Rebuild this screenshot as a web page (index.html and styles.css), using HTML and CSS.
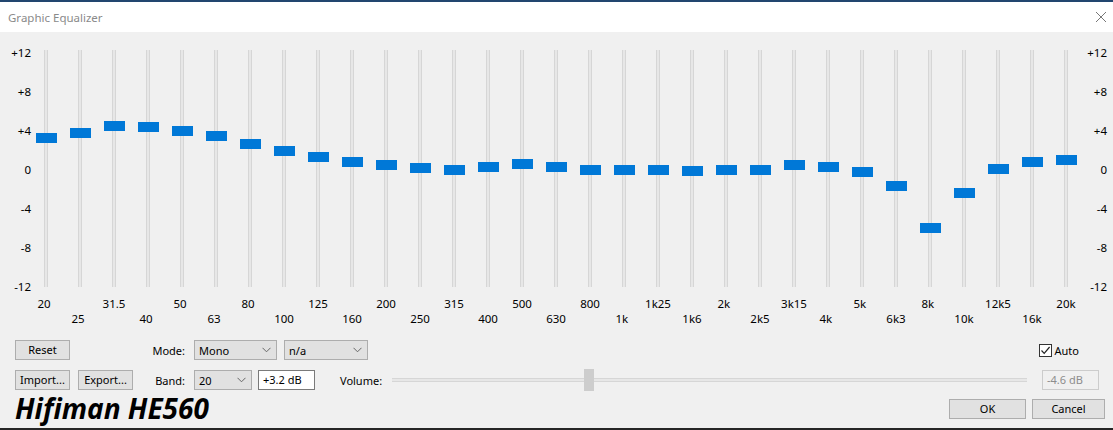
FILE: index.html
```html
<!DOCTYPE html>
<html>
<head>
<meta charset="utf-8">
<title>Graphic Equalizer</title>
<link rel="stylesheet" href="styles.css">
</head>
<body>
<div class="window">
  <div class="titlebar">
    <span class="title">Graphic Equalizer</span>
    <svg class="close" width="12" height="12" viewBox="0 0 12 12"><path d="M1 1 L11 11 M11 1 L1 11" stroke="#777" stroke-width="1" fill="none"/></svg>
  </div>
  <div class="client">
    <div class="eq">
      <div class="scale scale-left">
        <span>+12</span><span>+8</span><span>+4</span><span>0</span><span>-4</span><span>-8</span><span>-12</span>
      </div>
      <div class="bands">
        <div class="band up" style="--v:3.2"><div class="slider"><div class="track"></div><div class="thumb"></div></div><div class="freq"><span>20</span></div></div>
        <div class="band down" style="--v:3.7"><div class="slider"><div class="track"></div><div class="thumb"></div></div><div class="freq"><span>25</span></div></div>
        <div class="band up" style="--v:4.4"><div class="slider"><div class="track"></div><div class="thumb"></div></div><div class="freq"><span>31.5</span></div></div>
        <div class="band down" style="--v:4.3"><div class="slider"><div class="track"></div><div class="thumb"></div></div><div class="freq"><span>40</span></div></div>
        <div class="band up" style="--v:3.9"><div class="slider"><div class="track"></div><div class="thumb"></div></div><div class="freq"><span>50</span></div></div>
        <div class="band down" style="--v:3.4"><div class="slider"><div class="track"></div><div class="thumb"></div></div><div class="freq"><span>63</span></div></div>
        <div class="band up" style="--v:2.6"><div class="slider"><div class="track"></div><div class="thumb"></div></div><div class="freq"><span>80</span></div></div>
        <div class="band down" style="--v:1.8"><div class="slider"><div class="track"></div><div class="thumb"></div></div><div class="freq"><span>100</span></div></div>
        <div class="band up" style="--v:1.25"><div class="slider"><div class="track"></div><div class="thumb"></div></div><div class="freq"><span>125</span></div></div>
        <div class="band down" style="--v:0.75"><div class="slider"><div class="track"></div><div class="thumb"></div></div><div class="freq"><span>160</span></div></div>
        <div class="band up" style="--v:0.45"><div class="slider"><div class="track"></div><div class="thumb"></div></div><div class="freq"><span>200</span></div></div>
        <div class="band down" style="--v:0.1"><div class="slider"><div class="track"></div><div class="thumb"></div></div><div class="freq"><span>250</span></div></div>
        <div class="band up" style="--v:-0.1"><div class="slider"><div class="track"></div><div class="thumb"></div></div><div class="freq"><span>315</span></div></div>
        <div class="band down" style="--v:0.25"><div class="slider"><div class="track"></div><div class="thumb"></div></div><div class="freq"><span>400</span></div></div>
        <div class="band up" style="--v:0.55"><div class="slider"><div class="track"></div><div class="thumb"></div></div><div class="freq"><span>500</span></div></div>
        <div class="band down" style="--v:0.25"><div class="slider"><div class="track"></div><div class="thumb"></div></div><div class="freq"><span>630</span></div></div>
        <div class="band up" style="--v:-0.1"><div class="slider"><div class="track"></div><div class="thumb"></div></div><div class="freq"><span>800</span></div></div>
        <div class="band down" style="--v:-0.1"><div class="slider"><div class="track"></div><div class="thumb"></div></div><div class="freq"><span>1k</span></div></div>
        <div class="band up" style="--v:-0.1"><div class="slider"><div class="track"></div><div class="thumb"></div></div><div class="freq"><span>1k25</span></div></div>
        <div class="band down" style="--v:-0.2"><div class="slider"><div class="track"></div><div class="thumb"></div></div><div class="freq"><span>1k6</span></div></div>
        <div class="band up" style="--v:-0.1"><div class="slider"><div class="track"></div><div class="thumb"></div></div><div class="freq"><span>2k</span></div></div>
        <div class="band down" style="--v:-0.1"><div class="slider"><div class="track"></div><div class="thumb"></div></div><div class="freq"><span>2k5</span></div></div>
        <div class="band up" style="--v:0.45"><div class="slider"><div class="track"></div><div class="thumb"></div></div><div class="freq"><span>3k15</span></div></div>
        <div class="band down" style="--v:0.25"><div class="slider"><div class="track"></div><div class="thumb"></div></div><div class="freq"><span>4k</span></div></div>
        <div class="band up" style="--v:-0.3"><div class="slider"><div class="track"></div><div class="thumb"></div></div><div class="freq"><span>5k</span></div></div>
        <div class="band down" style="--v:-1.7"><div class="slider"><div class="track"></div><div class="thumb"></div></div><div class="freq"><span>6k3</span></div></div>
        <div class="band up" style="--v:-6.0"><div class="slider"><div class="track"></div><div class="thumb"></div></div><div class="freq"><span>8k</span></div></div>
        <div class="band down" style="--v:-2.5"><div class="slider"><div class="track"></div><div class="thumb"></div></div><div class="freq"><span>10k</span></div></div>
        <div class="band up" style="--v:0.0"><div class="slider"><div class="track"></div><div class="thumb"></div></div><div class="freq"><span>12k5</span></div></div>
        <div class="band down" style="--v:0.75"><div class="slider"><div class="track"></div><div class="thumb"></div></div><div class="freq"><span>16k</span></div></div>
        <div class="band up" style="--v:0.95"><div class="slider"><div class="track"></div><div class="thumb"></div></div><div class="freq"><span>20k</span></div></div>
      </div>
      <div class="scale scale-right">
        <span>+12</span><span>+8</span><span>+4</span><span>0</span><span>-4</span><span>-8</span><span>-12</span>
      </div>
    </div>

    <div class="controls">
      <div class="row row1">
        <button class="btn btn-small">Reset</button>
        <span class="label label-mode">Mode:</span>
        <div class="combo combo-mode"><span>Mono</span><svg class="chev" width="9" height="6" viewBox="0 0 9 6"><path d="M0.5 0.8 L4.5 4.8 L8.5 0.8" stroke="#666" stroke-width="1" fill="none"/></svg></div>
        <div class="combo combo-na"><span>n/a</span><svg class="chev" width="9" height="6" viewBox="0 0 9 6"><path d="M0.5 0.8 L4.5 4.8 L8.5 0.8" stroke="#666" stroke-width="1" fill="none"/></svg></div>
        <div class="spacer"></div>
        <label class="check">
          <span class="box"><svg width="11" height="11" viewBox="0 0 11 11"><path d="M1.5 5.5 L4.2 8.3 L9.6 2" stroke="#222" stroke-width="1.2" fill="none"/></svg></span>
          <span>Auto</span>
        </label>
      </div>
      <div class="row row2">
        <button class="btn btn-small">Import...</button>
        <button class="btn btn-small btn-export">Export...</button>
        <span class="label label-band">Band:</span>
        <div class="combo combo-band"><span>20</span><svg class="chev" width="9" height="6" viewBox="0 0 9 6"><path d="M0.5 0.8 L4.5 4.8 L8.5 0.8" stroke="#666" stroke-width="1" fill="none"/></svg></div>
        <div class="textbox">+3.2 dB</div>
        <span class="label label-vol">Volume:</span>
        <div class="hslider"><div class="htrack"></div><div class="hthumb"></div></div>
        <div class="textbox textbox-disabled">-4.6 dB</div>
      </div>
      <div class="row row3">
        <span class="brand">Hifiman HE560</span>
        <div class="spacer"></div>
        <button class="btn btn-ok">OK</button>
        <button class="btn btn-cancel">Cancel</button>
      </div>
    </div>
  </div>
</div>
</body>
</html>
```

FILE: styles.css
```css
* { box-sizing: border-box; }

html, body {
  margin: 0;
  padding: 0;
  width: 1113px;
  height: 430px;
  overflow: hidden;
  background: #f0f0f0;
  font-family: "Noto Sans", "Open Sans", sans-serif;
  font-size: 11px;
  color: #000;
}

.window {
  width: 1113px;
  height: 430px;
  display: flex;
  flex-direction: column;
  border-top: 2px solid #22466f;
  border-bottom: 2px solid #262626;
}

.titlebar {
  height: 30px;
  background: #fff;
  display: flex;
  align-items: center;
  padding: 0 0 0 8px;
  flex: none;
}

.title {
  color: #8a8a8a;
  font-size: 11.5px;
  flex: 1;
}

.close {
  margin-right: 6px;
}

.client {
  flex: 1;
  display: flex;
  flex-direction: column;
  background: #f0f0f0;
}

/* ---------- equalizer ---------- */
.eq {
  display: flex;
  align-items: flex-start;
  height: 308px;
  flex: none;
}

.scale {
  display: grid;
  grid-template-rows: repeat(7, 39px);
  margin-top: 1px;
  line-height: 39px;
  text-align: right;
  font-size: 11.5px;
}

.scale-left {
  width: 29px;
}
.scale-left span {
  margin-right: -2px;
}

.scale-right {
  width: 24px;
}

.bands {
  display: flex;
}

.band {
  width: 34px;
  display: flex;
  flex-direction: column;
  align-items: center;
  margin-top: 18px;
}

.slider {
  position: relative;
  width: 34px;
  height: 237px;
  display: flex;
  justify-content: center;
}

.track {
  width: 4px;
  height: 100%;
  background: #e7e7e7;
  border-left: 1px solid #d6d6d6;
  border-right: 1px solid #d6d6d6;
}

.thumb {
  position: absolute;
  left: 6.5px;
  width: 21px;
  height: 10px;
  background: #0078d7;
  top: calc(114px - var(--v) * 9.75px);
}

.freq {
  margin-top: 9px;
  height: 30px;
  line-height: 15px;
  display: flex;
  justify-content: center;
  white-space: nowrap;
  font-size: 11.5px;
}

.freq span {
  min-width: 17px;
  text-align: left;
  display: block;
}

.band.down .freq {
  padding-top: 15px;
}

/* ---------- controls ---------- */
.controls {
  display: flex;
  flex-direction: column;
  padding: 0 8px 0 15px;
}

.row {
  display: flex;
  align-items: center;
  height: 20px;
}

.row2 { margin-top: 10px; }
.row3 { margin-top: 9px; align-items: flex-start; }

.btn {
  font-family: inherit;
  font-size: 11px;
  height: 20px;
  background: #e1e1e1;
  border: 1px solid #adadad;
  color: #000;
  padding: 0;
  margin: 0;
  line-height: 18px;
}

.btn-small { width: 55px; }
.btn-export { margin-left: 8px; }

.label {
  display: block;
  white-space: nowrap;
}

.label-mode {
  width: 115px;
  text-align: right;
  margin-right: 9px;
}

.label-band {
  width: 52px;
  text-align: right;
  margin-right: 9px;
}

.combo {
  height: 20px;
  background: #e1e1e1;
  border: 1px solid #adadad;
  display: flex;
  align-items: center;
  justify-content: space-between;
  padding: 0 5px 0 4px;
}

.combo-mode { width: 83px; }
.combo-na { width: 84px; margin-left: 7px; }
.combo-band { width: 58px; }

.chev { display: block; }

.spacer { flex: 1; }

.check {
  display: flex;
  align-items: center;
  margin-right: 26px;
}

.check .box {
  width: 13px;
  height: 13px;
  border: 1px solid #333;
  background: #fff;
  display: flex;
  align-items: center;
  justify-content: center;
  margin-right: 3px;
}

.check .box svg { display: block; }

.textbox {
  width: 57px;
  height: 20px;
  background: #fff;
  border: 1px solid #7a7a7a;
  padding-left: 4px;
  line-height: 18px;
  margin-left: 6px;
}

.label-vol {
  width: 52px;
  margin-left: 25px;
}

.hslider {
  position: relative;
  width: 635px;
  height: 22px;
  display: flex;
  align-items: center;
}

.htrack {
  width: 100%;
  height: 4px;
  background: #e7e7e7;
  border-top: 1px solid #d6d6d6;
  border-bottom: 1px solid #d6d6d6;
}

.hthumb {
  position: absolute;
  left: 192px;
  top: 0;
  width: 10px;
  height: 22px;
  background: #cdcdcd;
}

.textbox-disabled {
  margin-left: 15px;
  background: #f0f0f0;
  border-color: #cccccc;
  color: #8d8d8d;
}

.brand {
  font-family: "Open Sans", "Noto Sans", sans-serif;
  font-weight: 700;
  font-style: italic;
  font-size: 28px;
  line-height: 20px;
  margin-top: -1px;
  letter-spacing: 0;
  color: #000;
}

.btn-ok {
  width: 77px;
}

.btn-cancel {
  width: 73px;
  margin-left: 6px;
}
```
